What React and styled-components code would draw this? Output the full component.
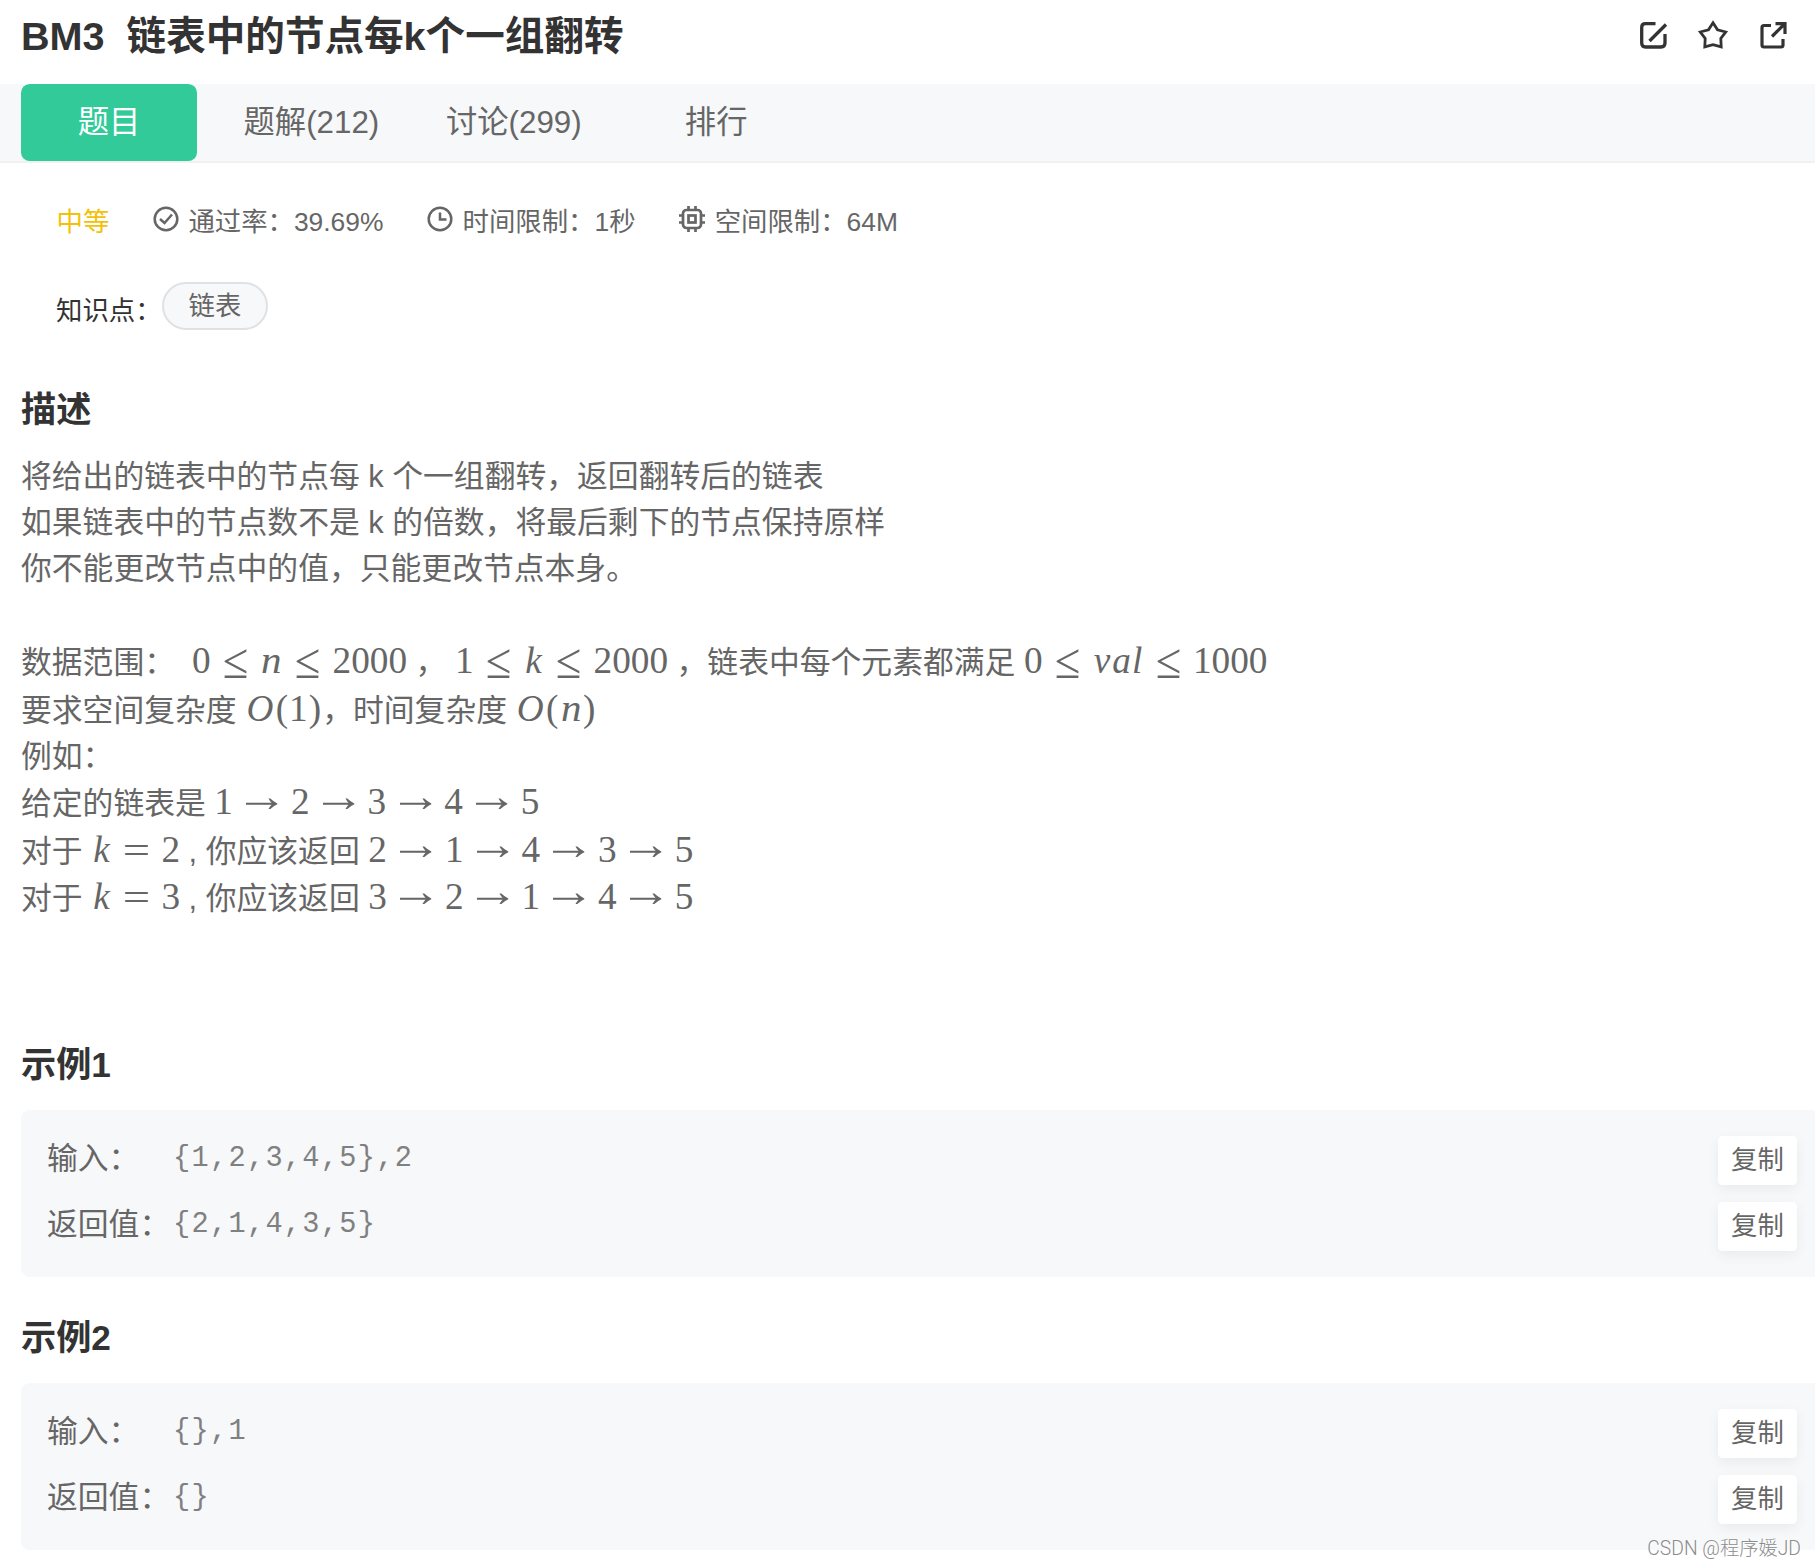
import styled, { createGlobalStyle } from "styled-components";

const GlobalStyle = createGlobalStyle`
  body {
    margin: 0;
    background: #ffffff;
    color: #666666;
    font-family: "Liberation Sans", "Noto Sans CJK SC", sans-serif;
    overflow: hidden;
  }

  * {
    box-sizing: border-box;
  }
`;

const Page = styled.main`
  width: 100%;
  height: 1566px;
  position: relative;
  overflow: hidden;
`;

const Header = styled.header`
  display: flex;
  justify-content: space-between;
  align-items: flex-start;
  height: 84px;
  padding: 0 26px 0 21px;
`;

const Title = styled.h1`
  display: flex;
  gap: 22px;
  margin: 0;
  font-size: 39.6px;
  line-height: 73px;
  color: #333333;
  white-space: nowrap;
`;

const Actions = styled.div`
  display: flex;
  gap: 28px;
  padding-top: 19px;
  color: #333333;

  svg {
    width: 32px;
    height: 32px;
  }
`;

const Tabs = styled.nav`
  display: flex;
  gap: 26.4px;
  height: 79px;
  padding-left: 21px;
  background: #f7f8fa;
  border-bottom: 2px solid #f0f1f3;
`;

const Tab = styled.a`
  width: 176px;
  height: 77px;
  border-radius: 8.8px;
  font-size: 31.3px;
  line-height: 77px;
  text-align: center;
  white-space: nowrap;
  color: ${(props) => (props.$active ? "#ffffff" : "#666666")};
  background: ${(props) => (props.$active ? "#32ca99" : "transparent")};
`;

const Meta = styled.div`
  display: flex;
  align-items: center;
  gap: 43.5px;
  height: 40px;
  margin-top: 39px;
  padding-left: 56.5px;
  font-size: 26.4px;
  line-height: 40px;
  white-space: nowrap;
`;

const Level = styled.span`
  color: #f3c107;
`;

const MetaItem = styled.span`
  display: flex;
  align-items: center;
  gap: 9.6px;

  svg {
    width: 26px;
    height: 26px;
    margin-top: -6px;
  }
`;

const Knowledge = styled.div`
  display: flex;
  height: 48px;
  margin-top: 40px;
  padding-left: 56px;
  font-size: 26.4px;
`;

const KnowledgeLabel = styled.span`
  width: 106px;
  line-height: 58px;
  color: #333333;
  white-space: nowrap;
`;

const Tag = styled.span`
  width: 106px;
  height: 48px;
  border: 2px solid #e0e1e4;
  border-radius: 24px;
  background: #f7f8fa;
  line-height: 44px;
  text-align: center;
`;

const Heading = styled.h2`
  height: 52px;
  margin: 0 0 0 21px;
  font-size: 35.2px;
  line-height: 52px;
  color: #333333;
`;

const Description = styled.section`
  padding-top: 54px;
  height: 709px;
`;

const Line = styled.p`
  height: ${(props) => props.$height || 46.2}px;
  margin: 0;
  padding-left: 21px;
  font-size: 30.8px;
  line-height: ${(props) => props.$height || 46.2}px;
  white-space: pre;
`;

const Lines = styled.div`
  padding-top: 18px;
`;

const Formula = styled.span`
  display: inline-block;
  font-family: "Liberation Serif", serif;
  font-size: 37.27px;
  line-height: 40px;
`;

const Symbol = styled.span`
  display: inline-block;
  width: ${(props) => props.$width}em;
  margin: 0 ${(props) => (props.$relation ? 0.278 : 0)}em;
  font-style: ${(props) => (props.$italic ? "italic" : "normal")};
  text-align: center;
  transform: ${(props) => props.$transform || "none"};
`;

const Example = styled.section`
  height: 273px;
`;

const ExampleBox = styled.div`
  display: flex;
  flex-direction: column;
  gap: 17px;
  height: 167px;
  margin: 19px 0 0 21px;
  padding: 26px 18px 0 26px;
  border-radius: 8.8px 0 0 8.8px;
  background: #f7f8fa;
`;

const ExampleRow = styled.div`
  display: flex;
  height: 49px;
  font-size: 30.8px;
  line-height: 45px;
  white-space: nowrap;
`;

const ExampleLabel = styled.span`
  width: 126px;
`;

const Code = styled.code`
  flex: 1;
  font-family: "Liberation Mono", monospace;
  font-size: 28.6px;
  letter-spacing: 1.32px;
  color: #808080;
`;

const CopyButton = styled.button`
  width: 79px;
  height: 49px;
  padding: 0;
  border: 0;
  border-radius: 4.4px;
  background: #ffffff;
  box-shadow: 0 4px 13px rgba(0, 0, 0, 0.06);
  color: #666666;
  font-family: inherit;
  font-size: 26.4px;
  line-height: 47px;
`;

const Watermark = styled.div`
  position: absolute;
  right: 14px;
  bottom: 3px;
  font-family: Roboto, "Noto Sans CJK SC", sans-serif;
  font-size: 19.3px;
  font-weight: 300;
  line-height: 28px;
  color: #8c8c8c;
  text-shadow: 1px 1px 0 #ffffff;
  white-space: nowrap;
`;

const EditIcon = () => (
  <svg viewBox="0 0 32 32" fill="none" stroke="currentColor" strokeWidth="3.3">
    <path d="M18.500 4.700H8.500Q4.700 4.700 4.700 8.500V24Q4.700 28 8.500 28H24Q28 28 28 24V15M12.500 22L29 5.500" />
  </svg>
);

const StarIcon = () => (
  <svg viewBox="0 0 32 32" fill="none" stroke="currentColor" strokeWidth="2.8">
    <path d="M16 3.800L20.500 10.800L28.700 13L23.800 19.500L24.200 27.800L16 25.600L7.800 27.800L8.200 19.500L3.300 13L11.500 10.800Z" />
  </svg>
);

const ShareIcon = () => (
  <svg viewBox="0 0 32 32" fill="none" stroke="currentColor" strokeWidth="3.2">
    <path d="M14 6.500H7Q5 6.500 5 8.500V26Q5 28 7 28H24Q26 28 26 26V20M18.500 4.700H28V15M27.500 5L15 17.500" />
  </svg>
);

const PassIcon = () => (
  <svg viewBox="0 0 26 26" fill="none" stroke="currentColor" strokeWidth="2.5">
    <circle cx="13" cy="13" r="11.300" />
    <path d="M7 13L11.500 17L19 8.500" />
  </svg>
);

const ClockIcon = () => (
  <svg viewBox="0 0 26 26" fill="none" stroke="currentColor" strokeWidth="2.5">
    <circle cx="13" cy="13" r="11.300" />
    <path d="M13 6.500V13.500H19.500" />
  </svg>
);

const ChipIcon = () => (
  <svg viewBox="0 0 26 26" fill="none" stroke="currentColor" strokeWidth="2.7">
    <rect x="4" y="4" width="18" height="18" rx="3.500" />
    <rect x="9.500" y="9.500" width="7" height="7" />
    <path d="M9.500 0V4M16.500 0V4M9.500 22V26M16.500 22V26M0 9.500H4M0 16.500H4M22 9.500H26M22 16.500H26" />
  </svg>
);

// advance width of every symbol, in em
const symbols = {
  "≤": { $width: 0.778, $relation: true, $transform: "translateY(1px) scale(1.25, 1.35)" },
  "=": { $width: 0.778, $relation: true, $transform: "translateY(1px) scaleX(1.3)" },
  "→": { $width: 1, $relation: true, $transform: "translateY(-5px) scale(1.42, 1.2)" },
  n: { $width: 0.6, $italic: true, $transform: "scaleX(1.1)" },
  k: { $width: 0.552, $italic: true },
  v: { $width: 0.521, $italic: true },
  a: { $width: 0.529, $italic: true },
  l: { $width: 0.318, $italic: true },
  O: { $width: 0.791, $italic: true },
  "(": { $width: 0.389 },
  ")": { $width: 0.389 },
};

const MathText = ({ children }) => (
  <Formula>
    {[...children].map((char, index) => (
      <Symbol key={index} {...(symbols[char] || { $width: 0.5 })}>
        {char}
      </Symbol>
    ))}
  </Formula>
);

const tabs = ["题目", "题解(212)", "讨论(299)", "排行"];

const examples = [
  { title: "示例1", input: "{1,2,3,4,5},2", output: "{2,1,4,3,5}" },
  { title: "示例2", input: "{},1", output: "{}" },
];

export default function App() {
  return (
    <Page>
      <GlobalStyle />
      <Header>
        <Title>
          <span>BM3</span>
          <span>链表中的节点每k个一组翻转</span>
        </Title>
        <Actions>
          <EditIcon />
          <StarIcon />
          <ShareIcon />
        </Actions>
      </Header>
      <Tabs>
        {tabs.map((tab, index) => (
          <Tab key={tab} $active={index === 0}>{tab}</Tab>
        ))}
      </Tabs>
      <Meta>
        <Level>中等</Level>
        <MetaItem>
          <PassIcon />
          <span>通过率：39.69%</span>
        </MetaItem>
        <MetaItem>
          <ClockIcon />
          <span>时间限制：1秒</span>
        </MetaItem>
        <MetaItem>
          <ChipIcon />
          <span>空间限制：64M</span>
        </MetaItem>
      </Meta>
      <Knowledge>
        <KnowledgeLabel>知识点：</KnowledgeLabel>
        <Tag>链表</Tag>
      </Knowledge>
      <Description>
        <Heading>描述</Heading>
        <Lines>
          <Line>将给出的链表中的节点每 k 个一组翻转，返回翻转后的链表</Line>
          <Line>如果链表中的节点数不是 k 的倍数，将最后剩下的节点保持原样</Line>
          <Line>你不能更改节点中的值，只能更改节点本身。</Line>
          <Line />
          <Line $height={48}>
            数据范围：{"  "}<MathText>0≤n≤2000</MathText> ， <MathText>1≤k≤2000</MathText> ，链表中每个元素都满足 <MathText>0≤val≤1000</MathText>
          </Line>
          <Line $height={47}>
            要求空间复杂度 <MathText>O(1)</MathText>，时间复杂度 <MathText>O(n)</MathText>
          </Line>
          <Line>例如：</Line>
          <Line $height={48}>
            给定的链表是 <MathText>1→2→3→4→5</MathText>
          </Line>
          <Line $height={47.3}>
            对于 <MathText>k=2</MathText> , 你应该返回 <MathText>2→1→4→3→5</MathText>
          </Line>
          <Line $height={47.3}>
            对于 <MathText>k=3</MathText> , 你应该返回 <MathText>3→2→1→4→5</MathText>
          </Line>
        </Lines>
      </Description>
      {examples.map((example) => (
        <Example key={example.title}>
          <Heading>{example.title}</Heading>
          <ExampleBox>
            <ExampleRow>
              <ExampleLabel>输入：</ExampleLabel>
              <Code>{example.input}</Code>
              <CopyButton>复制</CopyButton>
            </ExampleRow>
            <ExampleRow>
              <ExampleLabel>返回值：</ExampleLabel>
              <Code>{example.output}</Code>
              <CopyButton>复制</CopyButton>
            </ExampleRow>
          </ExampleBox>
        </Example>
      ))}
      <Watermark>CSDN @程序媛JD</Watermark>
    </Page>
  );
}
